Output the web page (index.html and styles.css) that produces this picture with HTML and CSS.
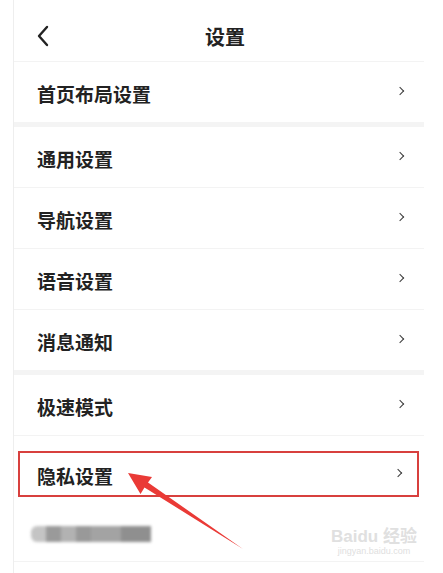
FILE: index.html
```html
<!DOCTYPE html>
<html lang="zh-CN">
<head>
  <meta charset="UTF-8">
  <meta name="viewport" content="width=device-width, initial-scale=1.0">
  <title>设置</title>
  <link rel="stylesheet" href="styles.css">
</head>
<body>

  <div class="page">
    <!-- 顶部导航 -->
    <div class="header">
      <svg class="back" width="14" height="22" viewBox="0 0 14 22">
        <path d="M11 2 L3 11 L11 20" fill="none" stroke="#222" stroke-width="2.4" stroke-linecap="round" stroke-linejoin="round"/>
      </svg>
      <h1>设置</h1>
    </div>

    <!-- 设置列表 -->
    <div class="item"><span>首页布局设置</span><i class="arrow"></i></div>
    <div class="gap"></div>
    <div class="item"><span>通用设置</span><i class="arrow"></i></div>
    <div class="item"><span>导航设置</span><i class="arrow"></i></div>
    <div class="item"><span>语音设置</span><i class="arrow"></i></div>
    <div class="item"><span>消息通知</span><i class="arrow"></i></div>
    <div class="gap"></div>
    <div class="item"><span>极速模式</span><i class="arrow"></i></div>
    <div class="item-marked">
      <div class="mark"><span>隐私设置</span><i class="arrow"></i></div>
    </div>
    <div class="item-blur">
      <div class="blur">
        <b class="b1"></b><b class="b2"></b><b class="b3"></b><b class="b4"></b><b class="b5"></b><b class="b6"></b>
      </div>
    </div>

    <!-- 标注箭头 -->
    <svg class="pointer" width="443" height="573" viewBox="0 0 443 573">
      <polygon points="128,473 152,477 148,482.5 243,549 144.5,487.5 140.5,494" fill="#ea3a36"/>
    </svg>

    <div class="watermark">
      <div class="wm-logo">Bai<span>du</span> 经验</div>
      <div class="wm-url">jingyan.baidu.com</div>
    </div>
  </div>

</body>
</html>
```

FILE: styles.css
```css
body {
  margin: 0;
  padding: 0;
  background-color: #fff;
  font-family: "Noto Sans CJK SC", "Noto Sans", sans-serif;
  color: #222;
}

.page {
  position: relative;
  width: 410px;
  height: 573px;
  margin-left: 13px;
  border-left: 1px solid #eeeeee;
  overflow: hidden;
}

.header {
  height: 61px;
  display: flex;
  align-items: center;
  justify-content: center;
  position: relative;
  padding-left: 12px;
  border-bottom: 1px solid #f3f3f3;
}

.header h1 {
  margin: 0;
  font-size: 20px;
  font-weight: 700;
  padding-top: 12px;
}

.back {
  position: absolute;
  left: 22px;
  top: 25px;
}

.item {
  height: 60px;
  display: flex;
  align-items: center;
  justify-content: space-between;
  padding: 0 21px 0 23px;
  border-bottom: 1px solid #f3f3f3;
  font-size: 19px;
  font-weight: 700;
}

.item span, .mark span {
  padding-top: 2px;
}

.gap {
  height: 5px;
  background-color: #f4f4f4;
  margin-top: -1px;
}

.arrow {
  width: 5px;
  height: 5px;
  border-right: 1.8px solid #3a3a3a;
  border-top: 1.8px solid #3a3a3a;
  transform: rotate(45deg);
  margin-bottom: 3px;
}

.item-marked {
  height: 68px;
  padding: 15px 5px 0 4px;
  box-sizing: border-box;
}

.mark {
  height: 46px;
  box-sizing: border-box;
  border: 2px solid #d8403e;
  display: flex;
  align-items: center;
  justify-content: space-between;
  padding: 0 16px 0 17px;
  font-size: 19px;
  font-weight: 700;
}

.item-blur {
  height: 57px;
  display: flex;
  align-items: center;
  padding-left: 17px;
  border-bottom: 1px solid #f3f3f3;
}

.blur {
  display: flex;
  height: 16px;
  filter: blur(1.5px);
  margin-top: 2px;
}

.blur b { display: block; height: 16px; }
.b1 { width: 15px; background-color: #c4c4c4; border-radius: 6px 0 0 6px; }
.b2 { width: 15px; background-color: #9a9a9a; }
.b3 { width: 15px; background-color: #b2b2b2; }
.b4 { width: 15px; background-color: #999; }
.b5 { width: 30px; background-color: #a3a3a3; }
.b6 { width: 30px; background-color: #8f8f8f; }

.pointer {
  position: absolute;
  left: -14px;
  top: 0;
}

.watermark {
  position: absolute;
  left: 312px;
  top: 528px;
  width: 96px;
  color: #e0e0e0;
  font-family: "Liberation Sans", "Noto Sans CJK SC", sans-serif;
  text-align: center;
  white-space: nowrap;
  line-height: 1.1;
}

.wm-logo {
  font-size: 17px;
  font-weight: 700;
}

.wm-url {
  font-size: 9px;
}
```
